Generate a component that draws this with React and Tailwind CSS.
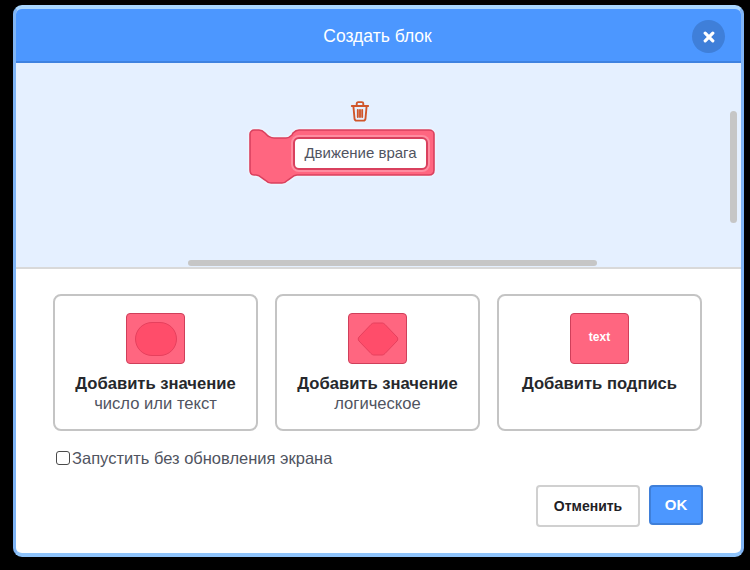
function Shape({ children }) {
  return (
    <div className="w-[59px] h-[51px] rounded-[4px] bg-[#ff6680] border-[1.5px] border-[#cf3f5a] flex items-center justify-center">
      {children}
    </div>
  );
}

function Card({ icon, title, sub }) {
  return (
    <div className="w-[205px] h-[137px] rounded-[8px] border-2 border-[#c4c4c4] bg-white flex flex-col items-center pt-[17px]">
      <Shape>{icon}</Shape>
      <div className="mt-[11px] text-[16.6px] leading-[18px] font-bold text-[#26282c]">{title}</div>
      {sub && <div className="mt-[2px] text-[16.6px] leading-[18px] text-[#50545f]">{sub}</div>}
    </div>
  );
}

export default function App() {
  return (
    <div className="w-[750px] h-[570px] bg-black pt-[5px] pl-[13px] font-['Liberation_Sans',Arial,sans-serif]">
      <div className="w-[731px] h-[552px] rounded-[9px] border-[3px] border-t-[4px] border-b-[4px] border-[#7fb4f5] border-t-[#a9d6ff] border-b-[#8fc4fb] bg-white overflow-hidden flex flex-col">
        <div className="relative h-[54px] shrink-0 bg-[#4c97ff] border-b-2 border-[#3f82e0] flex items-center justify-center pt-[2px] pr-[2px]">
          <span className="text-[17.5px] text-white font-medium">Создать блок</span>
          <div className="absolute right-[16px] top-[11px] w-[33px] h-[33px] rounded-full bg-[#3f7fd9] flex items-center justify-center">
            <svg width="12" height="12" viewBox="0 0 12 12">
              <path d="M2.2 2.2 L9.8 9.8 M9.8 2.2 L2.2 9.8" stroke="#fff" strokeWidth="3.2" strokeLinecap="round" />
            </svg>
          </div>
        </div>

        <div className="relative h-[206px] shrink-0 bg-[#e5f0ff] border-b-2 border-[#d9d9d9] flex flex-col items-start pt-[37px] pl-[233px]">
          <svg className="ml-[100px]" width="22" height="23" viewBox="0 0 20 21" fill="none">
            <path d="M2.5 5.5H17.5M7 5V3.2C7 2.5 7.5 2 8.2 2H11.8C12.5 2 13 2.5 13 3.2V5M4 6L5 17C5.1 18 5.8 18.8 6.8 18.8H13.2C14.2 18.8 14.9 18 15 17L16 6M8 9V15.5M10 9V15.5M12 9V15.5" stroke="#d0552a" strokeWidth="1.7" strokeLinecap="round" strokeLinejoin="round" />
          </svg>
          <div className="relative mt-[6px] w-[186px] h-[55px]">
            <svg width="186" height="55" viewBox="0 0 186 55" className="block drop-shadow-[0_0_1.5px_#ffffff]">
              <path d="M5 1H10C13 1 14 2 16 4L19 7C21 8 22 9 25 9H37C40 9 41 8 43 6L44 4C46 2 47 1 50 1H180C183 1 185 3 185 5V41C185 44 183 46 180 46H48C45 46 44 47 42 49L39 51C37 53 36 54 33 54H22C19 54 18 53 16 51L13 49C11 47 10 46 7 46H5C2 46 1 44 1 41V5C1 3 3 1 5 1Z" fill="#ff6680" stroke="#d9405e" strokeWidth="1.6" />
            </svg>
            <div className="absolute left-[44px] top-[8px] w-[135px] h-[33px] rounded-[6px] bg-white border-2 border-[#d9405e] shadow-[0_0_0_2px_#ff8ca0] flex items-center justify-center text-[15px] text-[#50545f]">
              Движение врага
            </div>
          </div>
          <div className="absolute right-[4px] top-[48px] w-[7px] h-[112px] rounded-full bg-[#c6c6c6]" />
          <div className="absolute left-[172px] bottom-[1px] w-[409px] h-[6px] rounded-full bg-[#c6c6c6]" />
        </div>

        <div className="flex-1 pl-[37px] pt-[25px]">
          <div className="flex gap-[17px]">
            <Card
              title="Добавить значение"
              sub="число или текст"
              icon={<div className="w-[42px] h-[34px] rounded-[17px] bg-[#ff4d6a] border border-[#e6405d]" />}
            />
            <Card
              title="Добавить значение"
              sub="логическое"
              icon={
                <svg width="42" height="34" viewBox="0 0 42 34">
                  <path d="M17 1H25C26 1 27 1.5 28 2.5L40 15C41 16.5 41 17.5 40 19L28 31.5C27 32.5 26 33 25 33H17C16 33 15 32.5 14 31.5L2 19C1 17.5 1 16.5 2 15L14 2.5C15 1.5 16 1 17 1Z" fill="#ff4d6a" stroke="#e6405d" strokeWidth="1" />
                </svg>
              }
            />
            <Card
              title="Добавить подпись"
              icon={<span className="-mt-[3px] text-[12px] font-bold text-white">text</span>}
            />
          </div>

          <label className="mt-[18px] ml-[3px] flex items-center">
            <span className="w-[14px] h-[14px] rounded-[3px] border-[1.5px] border-[#4a4a4a] bg-white" />
            <span className="ml-[2px] text-[16.5px] leading-[18px] text-[#50545f]">Запустить без обновления экрана</span>
          </label>

          <div className="mt-[18px] w-[650px] flex justify-end gap-[9px]">
            <div className="w-[104px] h-[42px] rounded-[4px] border-2 border-[#d0d0d0] bg-white flex items-center justify-center text-[14px] font-bold text-[#1f2125]">
              Отменить
            </div>
            <div className="w-[54px] h-[40px] rounded-[4px] bg-[#4c97ff] border-2 border-[#3f7fd9] flex items-center justify-center text-[15px] font-bold text-white">
              OK
            </div>
          </div>
        </div>
      </div>
    </div>
  );
}
